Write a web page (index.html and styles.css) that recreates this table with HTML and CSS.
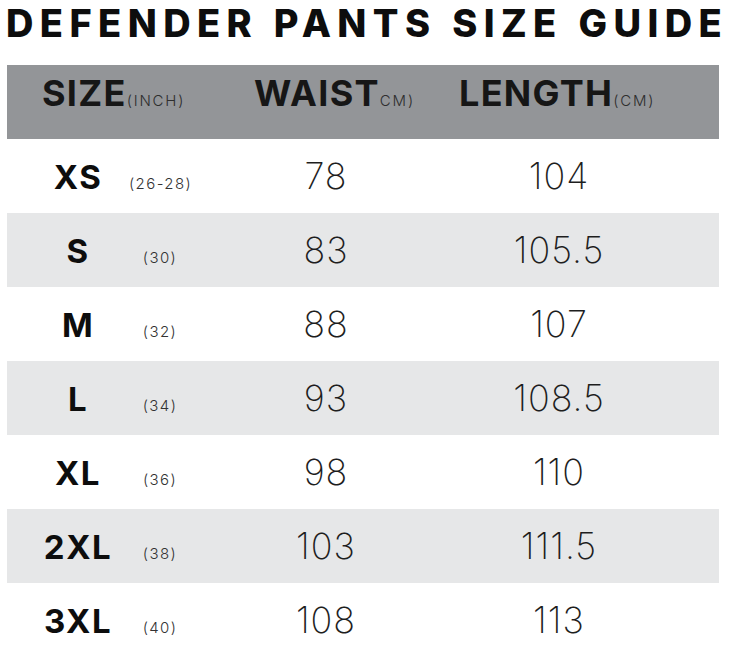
FILE: index.html
```html
<!DOCTYPE html>
<html>
<head>
<meta charset="utf-8">
<link rel="stylesheet" href="styles.css">
</head>
<body>
<h1 class="title">DEFENDER PANTS SIZE GUIDE</h1>
<div class="chart">
  <div class="head">
    <div class="hcell"><span class="hb">SIZE</span><span class="hs">(INCH)</span></div>
    <div class="hcell"><span class="hb">WAIST</span><span class="hs">CM)</span></div>
    <div class="hcell"><span class="hb">LENGTH</span><span class="hs">(CM)</span></div>
  </div>
  <div class="row"><span class="lab">XS</span><span class="inch">(26-28)</span><span class="num">78</span><span class="num">104</span></div>
  <div class="row alt"><span class="lab">S</span><span class="inch">(30)</span><span class="num">83</span><span class="num">105.5</span></div>
  <div class="row"><span class="lab">M</span><span class="inch">(32)</span><span class="num">88</span><span class="num">107</span></div>
  <div class="row alt"><span class="lab">L</span><span class="inch">(34)</span><span class="num">93</span><span class="num">108.5</span></div>
  <div class="row"><span class="lab">XL</span><span class="inch">(36)</span><span class="num">98</span><span class="num">110</span></div>
  <div class="row alt"><span class="lab">2XL</span><span class="inch">(38)</span><span class="num">103</span><span class="num">111.5</span></div>
  <div class="row"><span class="lab">3XL</span><span class="inch">(40)</span><span class="num">108</span><span class="num">113</span></div>
</div>
</body>
</html>
```
FILE: styles.css
```css
html, body {
  margin: 0;
  padding: 0;
  background: #ffffff;
}
body {
  font-family: Inter, "Liberation Sans", sans-serif;
  color: #111111;
  width: 732px;
  overflow: hidden;
}
.title {
  margin: 0 0 23px 0;
  padding: 5px 0 0 6px;
  font-size: 38px;
  line-height: 37px;
  font-weight: 800;
  letter-spacing: 6.4px;
  word-spacing: 1px;
  white-space: nowrap;
  color: #0d0d0d;
}
.chart {
  margin-left: 7px;
  width: 712px;
}
.head {
  background: #939598;
  height: 74px;
  display: grid;
  grid-template-columns: 212px 205px auto;
  padding-left: 35px;
  padding-top: 6px;
  align-content: start;
  align-items: baseline;
  box-sizing: border-box;
}
.hcell {
  white-space: nowrap;
}
.hb {
  font-size: 36px;
  font-weight: 700;
  letter-spacing: 1.3px;
  color: #161616;
}
.hs {
  font-size: 15px;
  font-weight: 300;
  color: #2e2e2e;
  letter-spacing: 1.8px;
}
.row {
  height: 74px;
  display: grid;
  grid-template-columns: 102px 62px 270px 196px;
  padding-left: 20px;
  align-content: center;
  align-items: baseline;
  box-sizing: border-box;
}
.row.alt {
  background: #e6e7e8;
}
.lab {
  text-align: center;
  font-size: 33px;
  font-weight: 700;
  letter-spacing: 1.5px;
  color: #0d0d0d;
}
.inch {
  text-align: center;
  font-size: 15px;
  font-weight: 300;
  letter-spacing: 1.4px;
  color: #333333;
  white-space: nowrap;
}
.num {
  text-align: center;
  font-size: 36px;
  font-weight: 200;
  letter-spacing: 1px;
  color: #1e1e1e;
}
```
